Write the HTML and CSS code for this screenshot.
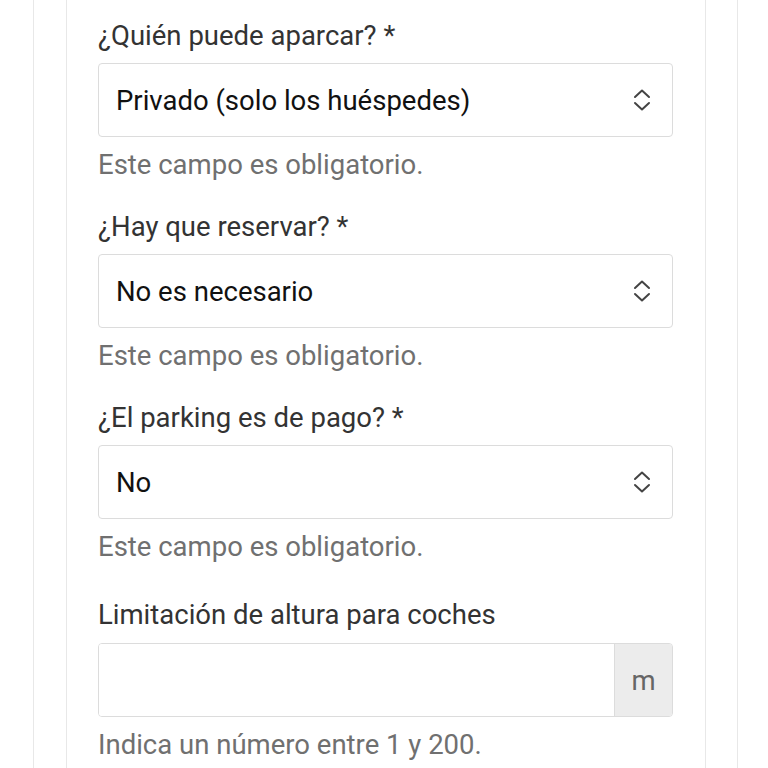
FILE: index.html
```html
<!DOCTYPE html>
<html lang="es">

<head>
    <meta charset="UTF-8">
    <meta name="viewport" content="width=device-width, initial-scale=1.0">
    <title>Parking</title>
    <link rel="stylesheet" href="styles.css">
</head>

<body>

    <div class="page">
        <div class="panel">
            <form class="parking-form">
                <div class="field">
                    <label for="who">¿Quién puede aparcar? *</label>
                    <div class="select-wrap">
                        <select id="who" name="who">
                            <option>Privado (solo los huéspedes)</option>
                            <option>Público</option>
                        </select>
                        <svg class="select-icon" viewBox="0 0 18 22" width="18" height="22" aria-hidden="true">
                            <path d="M2 8 L9 1.5 L16 8 M2 14 L9 20.5 L16 14" fill="none" stroke="#444" stroke-width="2" stroke-linecap="round" stroke-linejoin="round"/>
                        </svg>
                    </div>
                    <p class="help">Este campo es obligatorio.</p>
                </div>

                <div class="field">
                    <label for="booking">¿Hay que reservar? *</label>
                    <div class="select-wrap">
                        <select id="booking" name="booking">
                            <option>No es necesario</option>
                            <option>Sí</option>
                        </select>
                        <svg class="select-icon" viewBox="0 0 18 22" width="18" height="22" aria-hidden="true">
                            <path d="M2 8 L9 1.5 L16 8 M2 14 L9 20.5 L16 14" fill="none" stroke="#444" stroke-width="2" stroke-linecap="round" stroke-linejoin="round"/>
                        </svg>
                    </div>
                    <p class="help">Este campo es obligatorio.</p>
                </div>

                <div class="field">
                    <label for="paid">¿El parking es de pago? *</label>
                    <div class="select-wrap">
                        <select id="paid" name="paid">
                            <option>No</option>
                            <option>Sí</option>
                        </select>
                        <svg class="select-icon" viewBox="0 0 18 22" width="18" height="22" aria-hidden="true">
                            <path d="M2 8 L9 1.5 L16 8 M2 14 L9 20.5 L16 14" fill="none" stroke="#444" stroke-width="2" stroke-linecap="round" stroke-linejoin="round"/>
                        </svg>
                    </div>
                    <p class="help">Este campo es obligatorio.</p>
                </div>

                <div class="field field-optional">
                    <label for="height">Limitación de altura para coches</label>
                    <div class="input-group">
                        <input type="text" id="height" name="height">
                        <span class="addon">m</span>
                    </div>
                    <p class="help">Indica un número entre 1 y 200.</p>
                </div>
            </form>
        </div>
    </div>

</body>

</html>
```

FILE: styles.css
```css
body {
    font-family: Roboto, "Liberation Sans", sans-serif;
    margin: 0;
    padding: 0;
    background-color: #fff;
    color: #333;
}

.page {
    width: 705px;
    margin-left: 33px;
    padding: 0 31px 0 32px;
    border-left: 1px solid #e8e8e8;
    border-right: 1px solid #e8e8e8;
    box-sizing: border-box;
    min-height: 768px;
}

.panel {
    border-left: 1px solid #e8e8e8;
    border-right: 1px solid #e8e8e8;
    padding: 18px 32px 0 31px;
    min-height: 768px;
    box-sizing: border-box;
}

.field {
    margin-bottom: 26px;
}

.field label {
    display: block;
    font-size: 27.5px;
    line-height: 36px;
    color: #333;
    margin-bottom: 9px;
}

.field-optional {
    padding-top: 6px;
}

.field-optional label {
    margin-bottom: 10px;
}

.select-wrap {
    position: relative;
}

select,
.input-group {
    width: 100%;
    height: 74px;
    box-sizing: border-box;
    border: 1px solid #dcdcdc;
    border-radius: 4px;
    background-color: #fff;
}

select {
    appearance: none;
    -webkit-appearance: none;
    font-family: inherit;
    font-size: 27.5px;
    color: #111;
    padding: 0 60px 0 17px;
    margin: 0;
}

.select-icon {
    position: absolute;
    right: 22px;
    top: 26px;
    pointer-events: none;
}

.input-group {
    display: flex;
    overflow: hidden;
}

.input-group input {
    flex: 1;
    border: none;
    margin: 0;
    padding: 0 17px;
    font-family: inherit;
    font-size: 27.5px;
    min-width: 0;
}

.addon {
    width: 57px;
    border-left: 1px solid #dcdcdc;
    background-color: #ececec;
    color: #666;
    font-size: 27.5px;
    display: flex;
    align-items: center;
    justify-content: center;
}

.help {
    margin: 10px 0 0;
    font-size: 27.5px;
    line-height: 36px;
    color: #707070;
}
```
